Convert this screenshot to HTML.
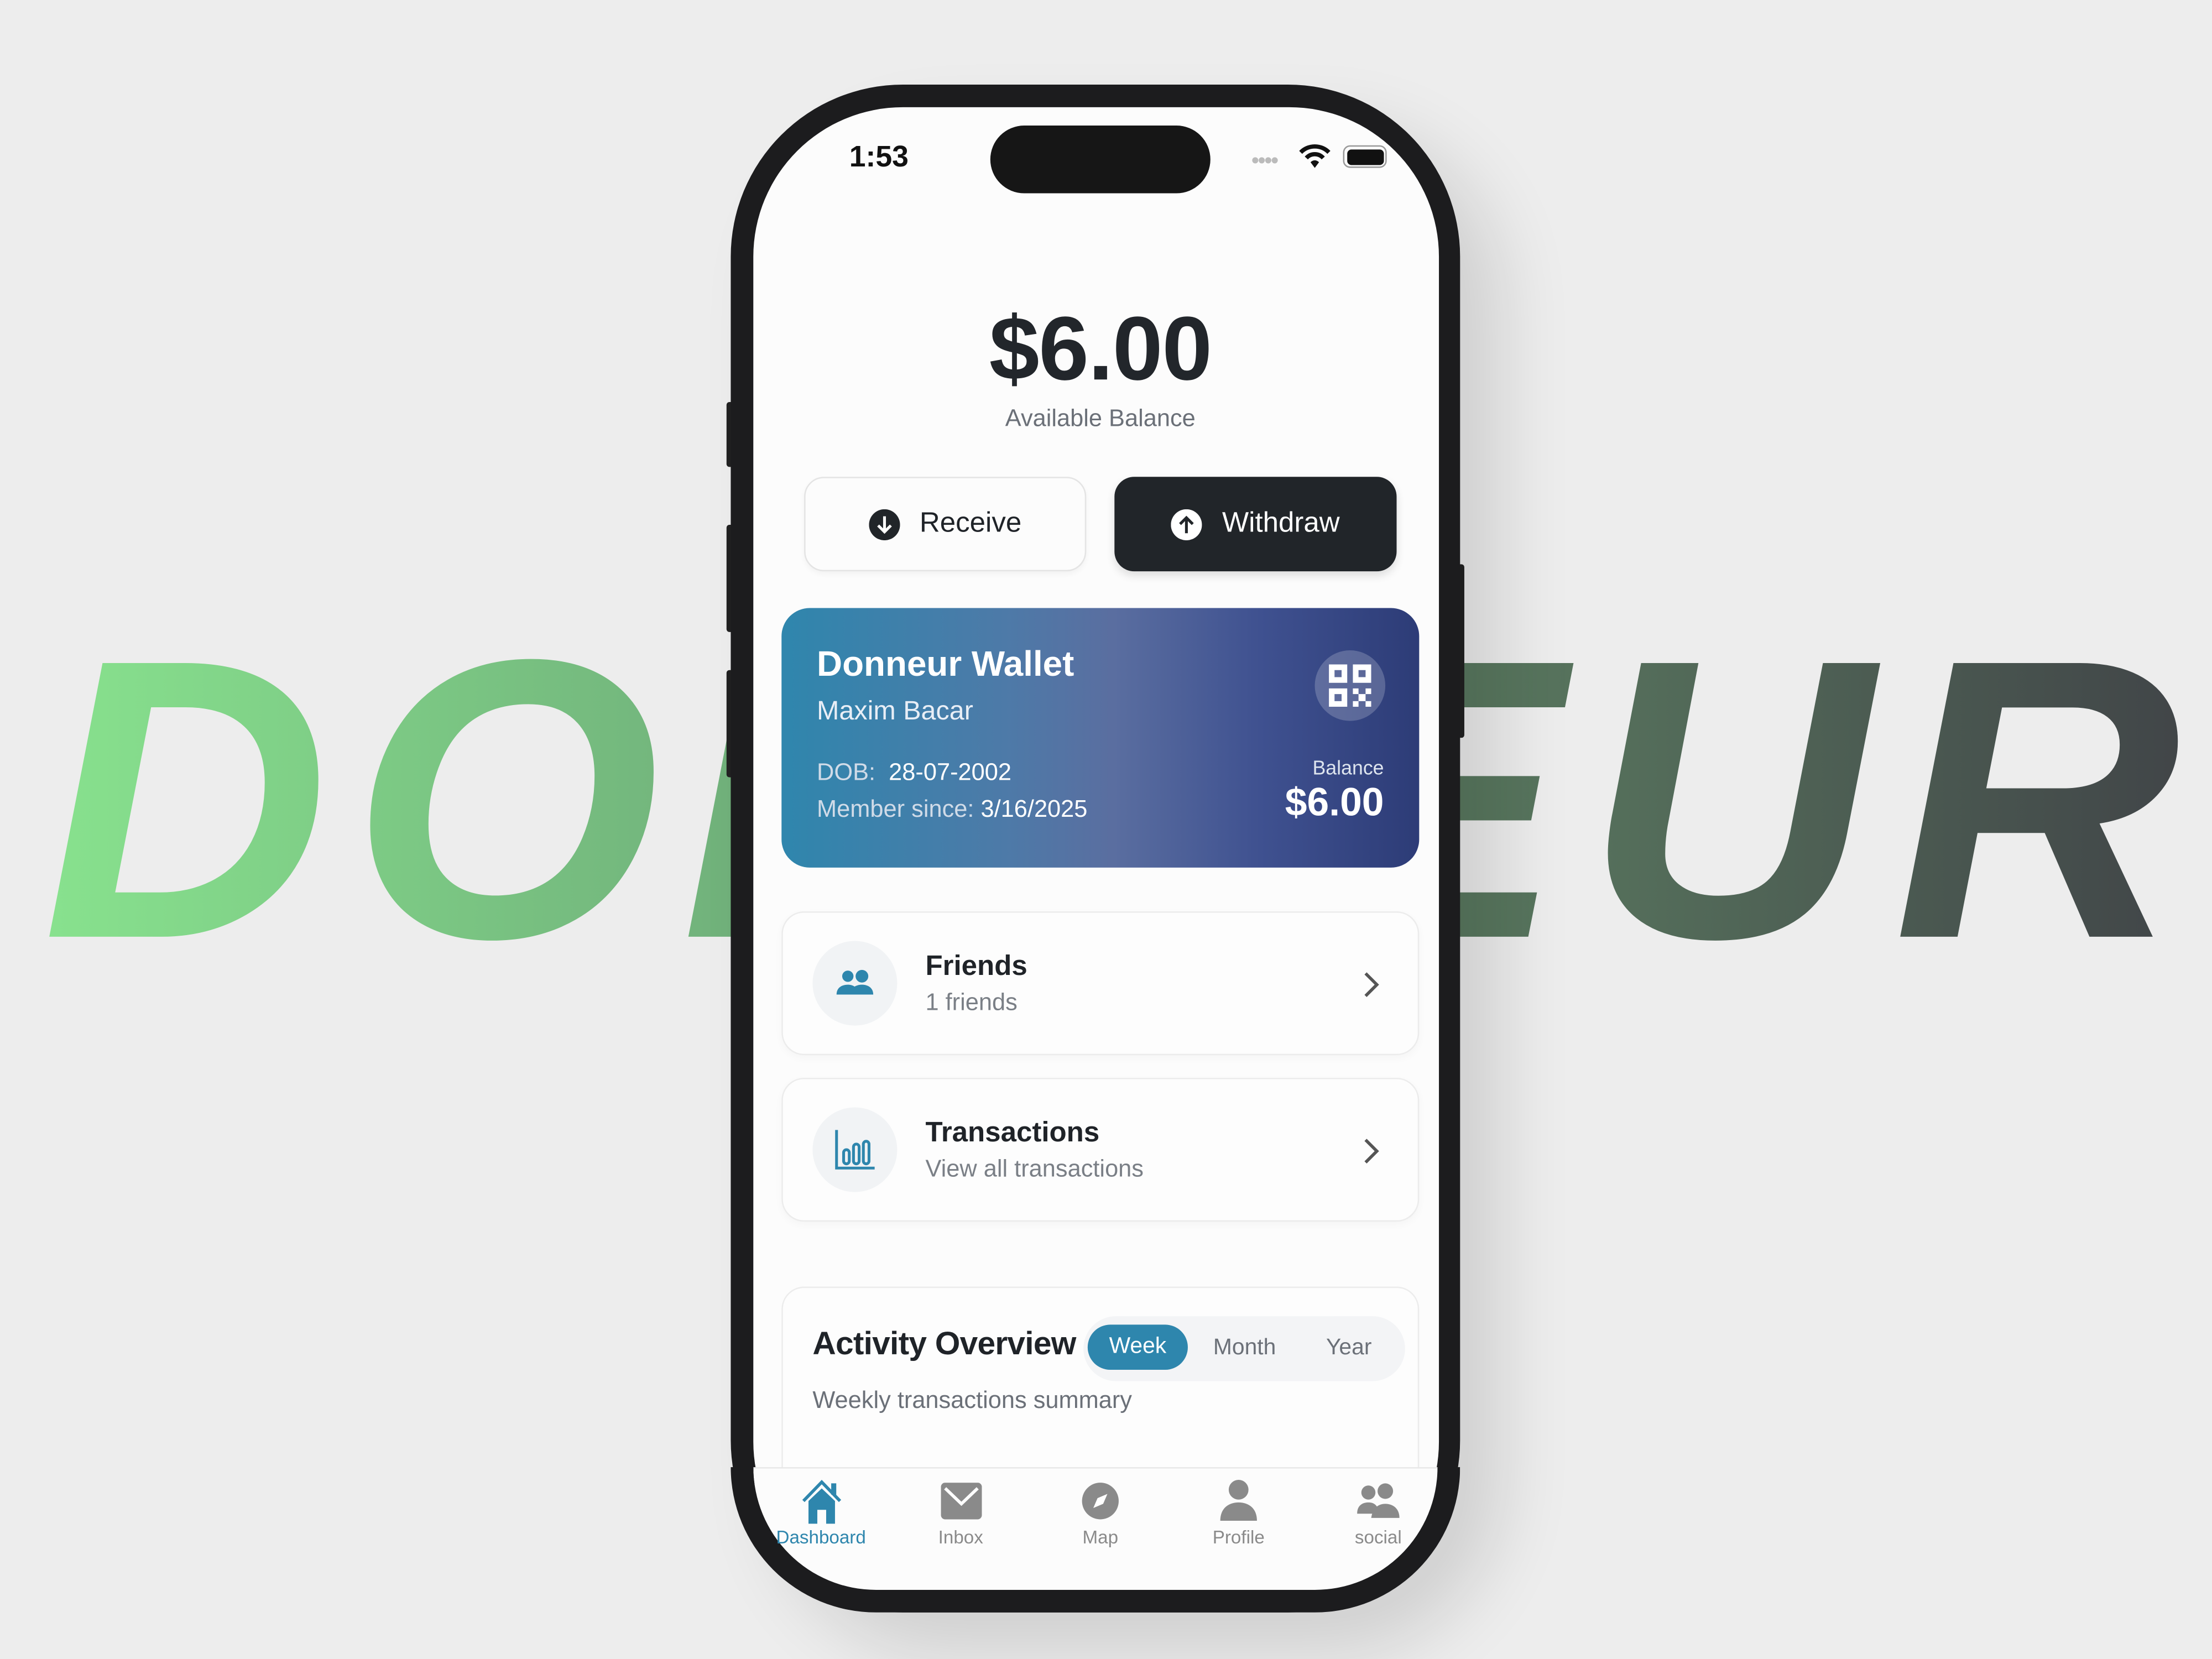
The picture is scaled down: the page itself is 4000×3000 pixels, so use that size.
<!DOCTYPE html>
<html><head><meta charset="utf-8"><style>
*{margin:0;padding:0;box-sizing:border-box}
html,body{width:4000px;height:3000px;overflow:hidden;background:#ededed}
#w{position:absolute;left:0;top:0;width:1568px;height:1176px;transform:scale(2.55102);transform-origin:0 0;font-family:"Liberation Sans",sans-serif;}
.big{position:absolute;left:30px;top:426px;font-size:282px;font-weight:bold;font-style:italic;letter-spacing:15px;white-space:nowrap;line-height:1;
background:linear-gradient(90deg,#88e28e 0%,#72b47c 30%,#5a7a60 65%,#404347 100%);-webkit-background-clip:text;background-clip:text;color:transparent;width:1540px}
.abs{position:absolute}
.phone{left:518px;top:60px;width:517px;height:1083px;border-radius:122px;background:#1c1c1e;box-shadow:30px 30px 60px rgba(0,0,0,0.12)}
.screen{left:534px;top:76px;width:486px;height:1052px;border-radius:106px;background:#fcfcfc;overflow:hidden}
.btnside{background:#222;border-radius:2px}
.t{position:absolute;white-space:nowrap}
.btn{position:absolute;top:338px;width:200px;height:67px;border-radius:14px;display:flex;align-items:center;justify-content:center;font-size:20px;gap:14px}
.card{position:absolute;left:554px;width:452px;background:#fdfdfd;border:1px solid #ececec;border-radius:16px;box-shadow:0 2px 6px rgba(0,0,0,0.03)}
.ic{position:absolute;left:21px;top:20px;width:60px;height:60px;border-radius:50%;background:#f1f3f5;display:flex;align-items:center;justify-content:center}
.nav{position:absolute;top:1082px;font-size:13px;color:#8a8a8a;width:100px;text-align:center}
</style></head><body><div id="w">
<div class="big">DONNEUR</div>
<div class="abs btnside" style="left:515px;top:285px;width:5px;height:46px"></div>
<div class="abs btnside" style="left:515px;top:372px;width:5px;height:76px"></div>
<div class="abs btnside" style="left:515px;top:475px;width:5px;height:76px"></div>
<div class="abs btnside" style="left:1033px;top:400px;width:5px;height:123px"></div>
<div class="abs phone"></div>
<div class="abs screen">
</div>
<div class="abs" style="left:702px;top:89px;width:156px;height:48px;border-radius:24px;background:#161616"></div>
<div class="t" style="left:602px;top:100px;font-size:21px;font-weight:bold;color:#111">1:53</div>
<div class="t" style="left:887px;top:106px;font-size:16px;color:#bbb;letter-spacing:-1px">••••</div>
<svg class="abs" style="left:920px;top:101px" width="24" height="20" viewBox="0 0 24 20"><path d="M2 7a14 14 0 0 1 20 0" stroke="#111" stroke-width="3" fill="none"/><path d="M6 11a8 8 0 0 1 12 0" stroke="#111" stroke-width="3" fill="none"/><path d="M9 14l3 4 3-4a4 4 0 0 0-6 0z" fill="#111"/></svg>
<div class="abs" style="left:952px;top:103px;width:31px;height:16px;border-radius:5px;border:1.5px solid #999;padding:1.5px"><div style="width:100%;height:100%;background:#111;border-radius:3px"></div></div>
<div class="t" style="left:580px;width:400px;text-align:center;top:210px;font-size:64px;font-weight:bold;color:#22262b;letter-spacing:-0.5px">$6.00</div>
<div class="t" style="left:580px;width:400px;text-align:center;top:287px;font-size:17px;color:#6b7078">Available Balance</div>
<div class="btn" style="left:570px;background:#fcfcfc;border:1px solid #e4e4e4;color:#1f2328;box-shadow:0 2px 4px rgba(0,0,0,0.04)">
<svg width="22" height="22" viewBox="0 0 22 22"><circle cx="11" cy="11" r="11" fill="#212529"/><path d="M11 5v11M6.5 11.5 11 16l4.5-4.5" stroke="#fff" stroke-width="2" fill="none"/></svg>Receive</div>
<div class="btn" style="left:790px;background:#212529;color:#fff;box-shadow:0 3px 6px rgba(0,0,0,0.12)">
<svg width="22" height="22" viewBox="0 0 22 22"><circle cx="11" cy="11" r="11" fill="#fff"/><path d="M11 17V6M6.5 10.5 11 6l4.5 4.5" stroke="#212529" stroke-width="2" fill="none"/></svg>Withdraw</div>
<div class="abs" style="left:554px;top:431px;width:452px;height:184px;border-radius:20px;background:linear-gradient(90deg,#2f86ad 0%,#4d7aa8 35%,#5a6ea0 52%,#3f5190 75%,#2d3c77 100%);color:#fff">
<div class="t" style="left:25px;top:26px;font-size:25px;font-weight:bold">Donneur Wallet</div>
<div class="t" style="left:25px;top:63px;font-size:19px;color:#e8eef6">Maxim Bacar</div>
<div class="t" style="left:25px;top:107px;font-size:17px"><span style="color:#d0dbe8">DOB:</span>&nbsp; 28-07-2002</div>
<div class="t" style="left:25px;top:133px;font-size:17px"><span style="color:#d0dbe8">Member since:</span>&nbsp;3/16/2025</div>
<div class="abs" style="left:378px;top:30px;width:50px;height:50px;border-radius:50%;background:rgba(255,255,255,0.2)">
<svg class="abs" style="left:10px;top:10px" width="30" height="30" viewBox="0 0 30 30" fill="#fff"><path d="M0 0h13v13H0zM4 4v5h5V4zM17 0h13v13H17zM21 4v5h5V4zM0 17h13v13H0zM4 21v5h5v-5z" fill-rule="evenodd"/><rect x="17" y="17" width="4" height="4"/><rect x="26" y="17" width="4" height="4"/><rect x="21" y="21" width="5" height="5"/><rect x="17" y="26" width="4" height="4"/><rect x="26" y="26" width="4" height="4"/></svg></div>
<div class="t" style="right:25px;top:105px;font-size:14px;color:#dde4ee">Balance</div>
<div class="t" style="right:25px;top:122px;font-size:28px;font-weight:bold">$6.00</div>
</div>
<div class="card" style="top:646px;height:102px">
<div class="ic"><svg width="28" height="20" viewBox="0 0 28 20" fill="#2e86ad"><circle cx="9" cy="5" r="4"/><circle cx="19" cy="5" r="4.5"/><path d="M1 18c0-5 4-7 8-7s6 2 7 4v3z"/><path d="M10 18c1-5 5-7 9-7s8 2 8 7z"/></svg></div>
<div class="t" style="left:101px;top:27px;font-size:20px;font-weight:600;color:#1f2328">Friends</div>
<div class="t" style="left:101px;top:54px;font-size:17px;color:#7a7f86">1 friends</div>
<svg class="abs" style="left:410px;top:41px" width="14" height="20" viewBox="0 0 14 20"><path d="M3 2l8 8-8 8" stroke="#555" stroke-width="2.2" fill="none"/></svg>
</div>
<div class="card" style="top:764px;height:102px">
<div class="ic"><svg width="30" height="30" viewBox="0 0 30 30" fill="none" stroke="#2e86ad" stroke-width="2"><path d="M2 1v27h27"/><rect x="7" y="15" width="4" height="10" rx="2"/><rect x="14" y="11" width="4" height="14" rx="2"/><rect x="21" y="9" width="4" height="16" rx="2"/></svg></div>
<div class="t" style="left:101px;top:27px;font-size:20px;font-weight:600;color:#1f2328">Transactions</div>
<div class="t" style="left:101px;top:54px;font-size:17px;color:#7a7f86">View all transactions</div>
<svg class="abs" style="left:410px;top:41px" width="14" height="20" viewBox="0 0 14 20"><path d="M3 2l8 8-8 8" stroke="#555" stroke-width="2.2" fill="none"/></svg>
</div>
<div class="card" style="top:912px;height:160px;box-shadow:none">
<div class="t" style="left:21px;top:26px;font-size:23px;font-weight:bold;color:#1f2328;letter-spacing:-0.3px">Activity Overview</div>
<div class="abs" style="left:213px;top:20px;width:228px;height:46px;border-radius:23px;background:#f3f4f6"></div>
<div class="abs" style="left:216px;top:26px;width:71px;height:32px;border-radius:16px;background:#2e86ad;color:#fff;font-size:16px;text-align:center;line-height:32px">Week</div>
<div class="t" style="left:305px;top:34px;font-size:16px;color:#6b7078">Month</div>
<div class="t" style="left:385px;top:34px;font-size:16px;color:#6b7078">Year</div>
<div class="t" style="left:21px;top:70px;font-size:17px;color:#6b7078">Weekly transactions summary</div>
</div>
<div class="abs" style="left:534px;top:1040px;width:486px;height:88px;background:#fcfcfc;border-top:1px solid #e8e8e8;border-radius:0 0 106px 106px"></div>
<div class="abs" style="left:518px;top:1040px;width:517px;height:103px;border-radius:0 0 122px 122px;border:16px solid #1c1c1e;border-top:none;pointer-events:none"></div>
<svg class="abs" style="left:567px;top:1047px" width="31" height="34" viewBox="0 0 31 38" fill="#2e86ad"><path d="M1 19L15.5 4 30 19" stroke="#2e86ad" stroke-width="2.5" fill="none"/><rect x="23" y="5" width="4" height="9"/><path d="M5 19L15.5 9 26 19v18H19V26h-7v11H5z"/></svg>
<div class="nav" style="left:532px;color:#2e86ad">Dashboard</div>
<svg class="abs" style="left:667px;top:1051px" width="29" height="26" viewBox="0 0 29 26"><rect width="29" height="26" rx="3" fill="#8a8a8a"/><path d="M3 4l11.5 11L26 4" stroke="#fff" stroke-width="2.2" fill="none"/></svg>
<div class="nav" style="left:631px">Inbox</div>
<svg class="abs" style="left:766px;top:1050px" width="28" height="28" viewBox="0 0 28 28"><circle cx="14" cy="14" r="13" fill="#8a8a8a"/><path d="M19 9l-3 7-7 3 3-7z" fill="#fff"/></svg>
<div class="nav" style="left:730px">Map</div>
<svg class="abs" style="left:864px;top:1048px" width="28" height="30" viewBox="0 0 28 30" fill="#8a8a8a"><circle cx="14" cy="8" r="7"/><path d="M1 30c0-9 6-13 13-13s13 4 13 13z"/></svg>
<div class="nav" style="left:828px">Profile</div>
<svg class="abs" style="left:962px;top:1051px" width="31" height="26" viewBox="0 0 31 26" fill="#8a8a8a"><circle cx="8" cy="7" r="5"/><circle cx="20" cy="6" r="5.5"/><path d="M0 22c0-6 4-8 8-8s6 2 7 5v3z"/><path d="M10 25c1-7 5-10 10-10s10 3 10 10z"/></svg>
<div class="nav" style="left:927px">social</div>
</div></body></html>
